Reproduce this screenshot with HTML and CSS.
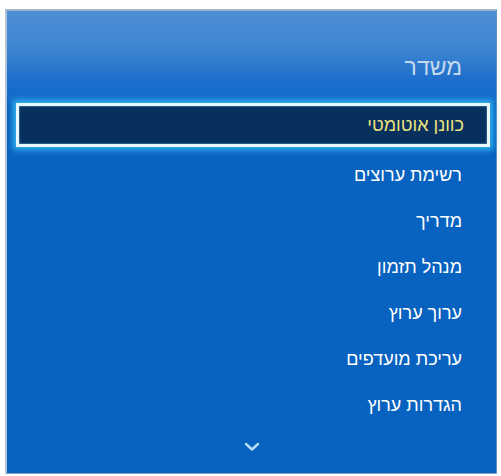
FILE: index.html
```html
<!DOCTYPE html>
<html lang="he" dir="rtl">
<head>
    <meta charset="UTF-8">
    <meta name="viewport" content="width=device-width, initial-scale=1.0">
    <title>משדר</title>
    <link rel="stylesheet" href="styles.css">
</head>
<body>
    <div class="panel">
        <div class="header">
            <div class="title">משדר</div>
        </div>
        <ul class="menu">
            <li class="item selected">כוונן אוטומטי</li>
            <li class="item">רשימת ערוצים</li>
            <li class="item">מדריך</li>
            <li class="item">מנהל תזמון</li>
            <li class="item">ערוך ערוץ</li>
            <li class="item">עריכת מועדפים</li>
            <li class="item">הגדרות ערוץ</li>
        </ul>
        <div class="more">
            <svg width="16" height="10" viewBox="0 0 16 10">
                <path d="M2 2 L8 7.5 L14 2" fill="none" stroke="#b9dcf6" stroke-width="2.4" stroke-linecap="round" stroke-linejoin="round"/>
            </svg>
        </div>
    </div>
</body>
</html>
```

FILE: styles.css
```css
* {
    margin: 0;
    padding: 0;
    box-sizing: border-box;
}
body {
    background: #fff;
    font-family: 'Liberation Sans', 'DejaVu Sans', sans-serif;
}
.panel {
    width: 492px;
    height: 465px;
    margin: 9px 4px 2px 5px;
    background: #0862c0;
    border-top: 2px solid #9fb4c8;
    border-left: 2px solid #b4c4d4;
    border-right: 1px solid #5f93c8;
    border-bottom: 1px solid #7fa4c8;
    display: flex;
    flex-direction: column;
}
.header {
    height: 92px;
    background: linear-gradient(180deg, #4d8fd6 0%, #3f86d2 40%, #1d6ecb 75%, #1169c8 100%);
    display: flex;
    align-items: center;
    padding-top: 20px;
    padding-right: 34px;
}
.title {
    color: #c4d9ee;
    font-size: 23px;
}
.menu {
    list-style: none;
}
.item {
    height: 46px;
    display: flex;
    align-items: center;
    padding-right: 34px;
    color: #fff;
    font-size: 18px;
}
.item.selected {
    height: 44px;
    margin: 0 6px 5px 9px;
    padding-right: 23px;
    background: #07305f;
    color: #ece37a;
    border: 3px solid #e8f8ff;
    box-shadow: 0 0 6px 3px #33b4f0, inset 0 0 2px #7ad0f8;
}
.more {
    flex: 1;
    display: flex;
    justify-content: center;
    padding-top: 14px;
}
```
